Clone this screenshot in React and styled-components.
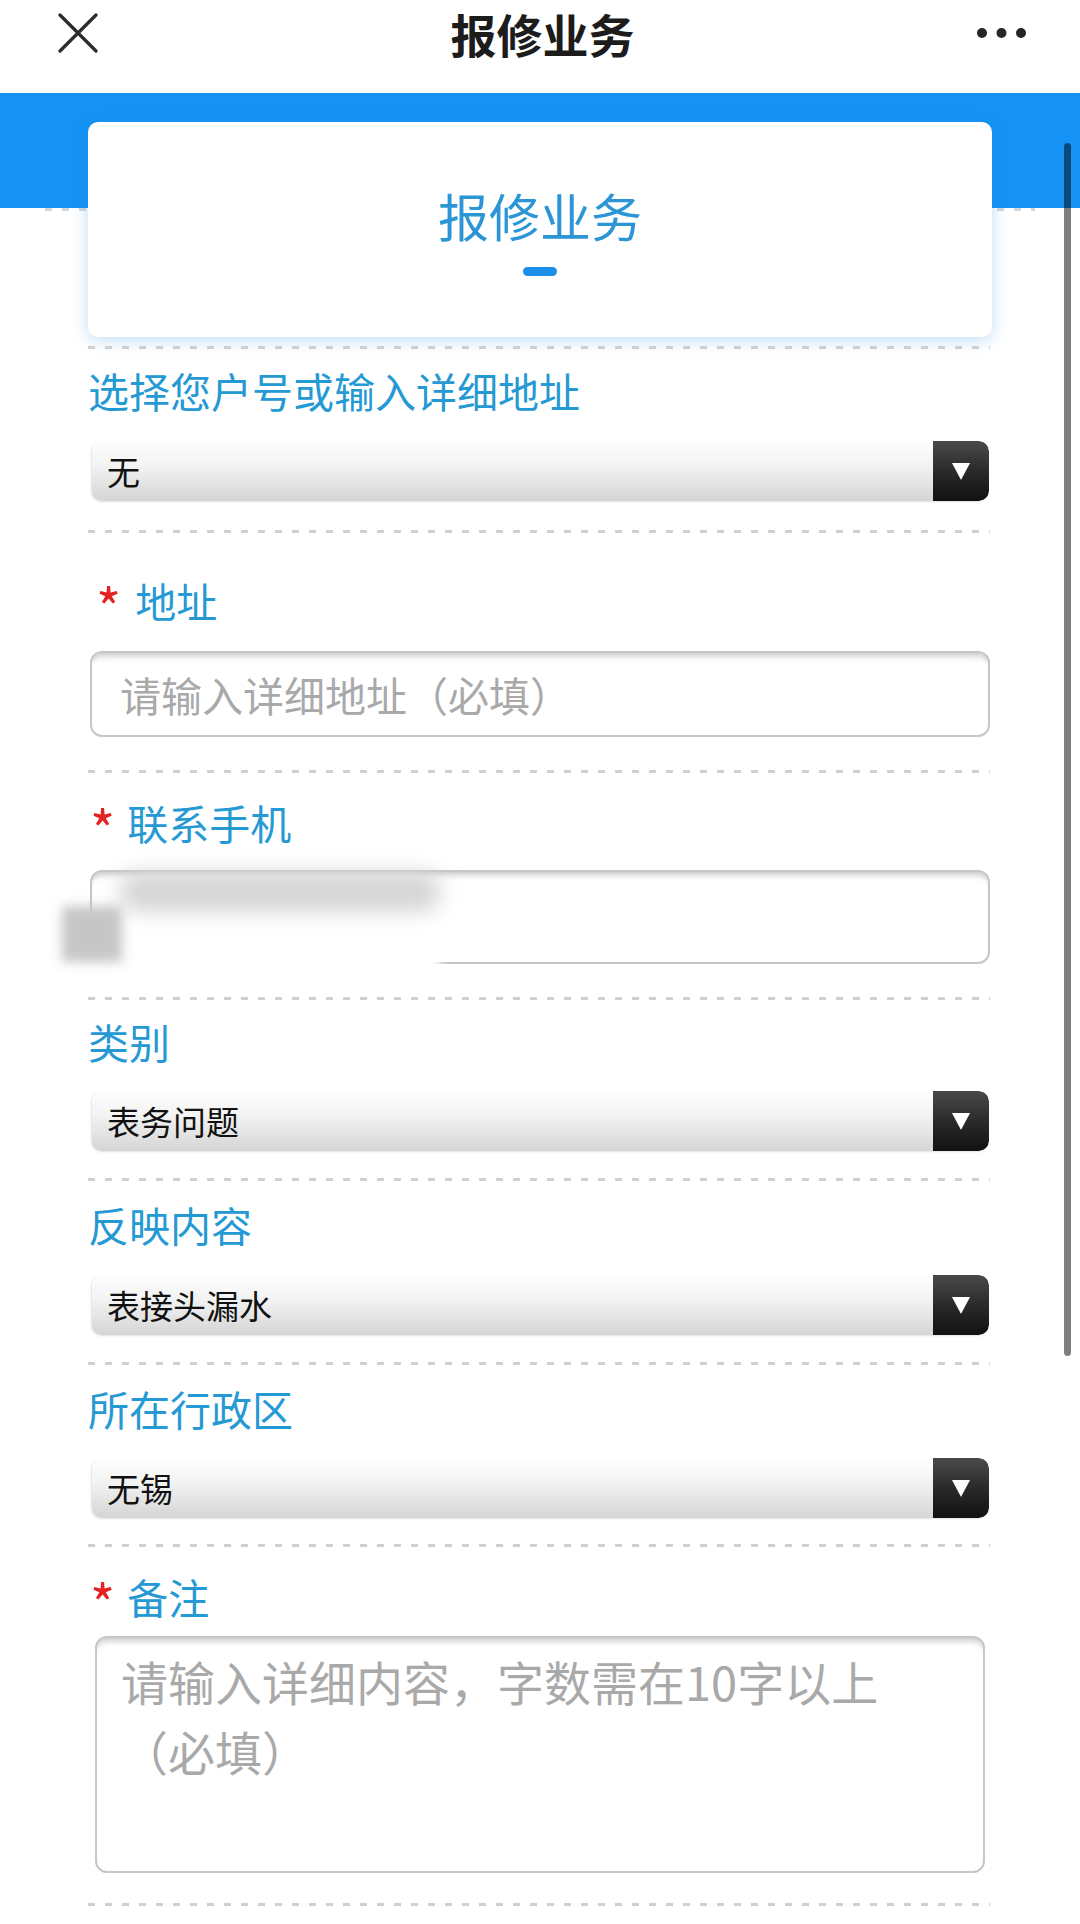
import React from 'react';
import styled, {createGlobalStyle} from 'styled-components';

const colors = {
    band: '#1592f3',
    label: '#2599d4',
    title: '#2b95d6',
    star: '#e52222',
    dash: '#cfcfcf',
    border: '#c6c6c6',
    hint: '#a9a9a9',
};

const GlobalStyle = createGlobalStyle`
    html, body {
        margin: 0;
        padding: 0;
        overflow: hidden;
        background: #fff;
    }
    body {
        font-family: "Noto Sans CJK SC", "Noto Sans", sans-serif;
    }
`;

const Page = styled.div`
    position: relative;
    width: 1080px;
    height: 1924px;
    overflow: hidden;
    background: #fff;
`;

// top navigation bar
const NavBar = styled.header`
    height: 93px;
    box-sizing: border-box;
    padding: 0 53px 27px 58px;
    display: flex;
    align-items: center;
    justify-content: space-between;
    background: #fff;
`;

const NavTitle = styled.h1`
    margin: 0;
    font-size: 46px;
    line-height: 66px;
    font-weight: 600;
    color: #1c1c1c;
`;

const NavSlot = styled.div`
    width: 50px;
    display: flex;
    justify-content: ${p => (p.$end ? 'flex-end' : 'flex-start')};
`;

const ScrollThumb = styled.div`
    position: absolute;
    left: 1064px;
    top: 143px;
    width: 7px;
    height: 1213px;
    border-radius: 4px;
    background: rgba(0, 0, 0, 0.5);
`;

// blue band with the floating card
const Hero = styled.section`
    padding: 29px 88px 9px;
    background:
        repeating-linear-gradient(to right, #cdd8e0 0 7px, transparent 7px 17px) 45px 115px / 990px 3px no-repeat,
        linear-gradient(${colors.band}, ${colors.band}) 0 0 / 100% 115px no-repeat,
        #fff;
`;

const Card = styled.div`
    height: 215px;
    box-sizing: border-box;
    padding-top: 68px;
    border-radius: 10px;
    background: #fff;
    box-shadow: 0 3px 16px rgba(40, 140, 220, 0.3);
    display: flex;
    flex-direction: column;
    align-items: center;
`;

const CardTitle = styled.h2`
    margin: 0;
    font-size: 51px;
    line-height: 51px;
    font-weight: 400;
    color: ${colors.title};
`;

const CardMark = styled.span`
    margin-top: 26px;
    width: 34px;
    height: 9px;
    border-radius: 5px;
    background: #1e8fe8;
`;

const Form = styled.form`
    margin: 0;
    padding: 0 88px;
`;

const Divider = styled.div`
    height: 3px;
    margin-right: 2px;
    background: repeating-linear-gradient(to right, ${colors.dash} 0 7px, transparent 7px 17px);
`;

const Field = styled.div`
    padding: ${p => p.$top}px 0 ${p => p.$bottom}px;
`;

const Label = styled.div`
    height: 50px;
    display: flex;
    align-items: center;
    margin-bottom: ${p => p.$gap}px;
    padding-left: ${p => p.$indent || 0}px;
    font-size: 41px;
    line-height: 50px;
    color: ${colors.label};
`;

const Star = styled.span`
    color: ${colors.star};
    font-size: 54px;
    line-height: 50px;
    margin-right: ${p => p.$space}px;
    position: relative;
    top: 6px;
`;

const SelectBox = styled.div`
    margin: 0 3px 0 4px;
    height: 60px;
    display: flex;
    align-items: center;
    border-radius: 10px;
    overflow: hidden;
    background: linear-gradient(180deg, #fefefe 0%, #f3f3f3 40%, #d5d5d5 100%);
    box-shadow: -1px 1px 2px rgba(0, 0, 0, 0.12);
`;

const SelectText = styled.span`
    flex: 1;
    padding-left: 15px;
    font-size: 33px;
    color: #111;
`;

const SelectButton = styled.span`
    width: 56px;
    align-self: stretch;
    display: flex;
    align-items: center;
    justify-content: center;
    border-radius: 0 10px 10px 0;
    background: linear-gradient(180deg, #4a4a4a 0%, #2a2a2a 50%, #111 100%);

    &::after {
        content: '';
        width: 0;
        height: 0;
        border-left: 9px solid transparent;
        border-right: 9px solid transparent;
        border-top: 17px solid #fff;
    }
`;

const InputWrap = styled.div`
    position: relative;
    margin: 0 ${p => p.$inset}px;
`;

const fieldBox = `
    display: block;
    box-sizing: border-box;
    width: 100%;
    border: 2px solid ${colors.border};
    border-radius: 12px;
    background: #fff;
    box-shadow: inset 0 8px 6px -5px rgba(0, 0, 0, 0.22);
    outline: none;
    font-family: "Noto Sans CJK SC", "Noto Sans", sans-serif;
    color: #222;
    &::placeholder {
        color: ${colors.hint};
    }
`;

const TextInput = styled.input`
    ${fieldBox}
    height: ${p => p.$h}px;
    padding: 0 28px;
    font-size: 41px;
`;

const TextArea = styled.textarea`
    ${fieldBox}
    height: 237px;
    resize: none;
    padding: 8px 50px 0 24px;
    font-size: 47px;
    line-height: 70px;
`;

// blurred privacy patch over the phone number
const Smudge = styled.div`
    position: absolute;
    left: ${p => p.$x}px;
    top: ${p => p.$y}px;
    width: ${p => p.$w}px;
    height: ${p => p.$hgt}px;
    border-radius: ${p => p.$r || 0}px;
    background: ${p => p.$c};
    filter: blur(${p => p.$blur}px);
`;

const CloseIcon = () => (
    <svg width="40" height="40" viewBox="0 0 40 40">
        <path d="M2 2 L38 38 M38 2 L2 38" stroke="#2a2a2a" strokeWidth="3.2" strokeLinecap="round" />
    </svg>
);

const MoreIcon = () => (
    <svg width="50" height="12" viewBox="0 0 50 12">
        <circle cx="5" cy="6" r="5" fill="#262626" />
        <circle cx="24.5" cy="6" r="5" fill="#262626" />
        <circle cx="44" cy="6" r="5" fill="#262626" />
    </svg>
);

const Select = ({value}) => (
    <SelectBox>
        <SelectText>{value}</SelectText>
        <SelectButton />
    </SelectBox>
);

const App = () => (
    <Page>
        <GlobalStyle />
        <NavBar>
            <NavSlot>
                <CloseIcon />
            </NavSlot>
            <NavTitle>报修业务</NavTitle>
            <NavSlot $end>
                <MoreIcon />
            </NavSlot>
        </NavBar>

        <Hero>
            <Card>
                <CardTitle>报修业务</CardTitle>
                <CardMark />
            </Card>
        </Hero>

        <Form onSubmit={e => e.preventDefault()}>
            <Divider />
            <Field $top={16} $bottom={29}>
                <Label $gap={26}>选择您户号或输入详细地址</Label>
                <Select value="无" />
            </Field>
            <Divider />
            <Field $top={42} $bottom={33}>
                <Label $gap={26} $indent={8}>
                    <Star $space={14}>*</Star>地址
                </Label>
                <InputWrap $inset={2}>
                    <TextInput $h={86} placeholder="请输入详细地址（必填）" />
                </InputWrap>
            </Field>
            <Divider />
            <Field $top={24} $bottom={33}>
                <Label $gap={23} $indent={2}>
                    <Star $space={12}>*</Star>联系手机
                </Label>
                <InputWrap $inset={2}>
                    <TextInput $h={94} />
                    <Smudge $x={-10} $y={76} $w={360} $hgt={26} $c="#fff" $blur={4} />
                    <Smudge $x={30} $y={2} $w={320} $hgt={40} $r={18} $c="#d6d6d6" $blur={10} />
                    <Smudge $x={-28} $y={36} $w={60} $hgt={56} $c="#c6c6c6" $blur={6} />
                </InputWrap>
            </Field>
            <Divider />
            <Field $top={16} $bottom={27}>
                <Label $gap={25}>类别</Label>
                <Select value="表务问题" />
            </Field>
            <Divider />
            <Field $top={18} $bottom={27}>
                <Label $gap={26}>反映内容</Label>
                <Select value="表接头漏水" />
            </Field>
            <Divider />
            <Field $top={18} $bottom={26}>
                <Label $gap={25}>所在行政区</Label>
                <Select value="无锡" />
            </Field>
            <Divider />
            <Field $top={24} $bottom={30}>
                <Label $gap={15} $indent={2}>
                    <Star $space={12}>*</Star>备注
                </Label>
                <InputWrap $inset={7}>
                    <TextArea placeholder="请输入详细内容，字数需在10字以上（必填）" />
                </InputWrap>
            </Field>
            <Divider />
            <Field $top={20} $bottom={20}>
                <Label $gap={15} $indent={2}>
                    <Star $space={12}>*</Star>报修图片
                </Label>
            </Field>
        </Form>

        <ScrollThumb />
    </Page>
);

export default App;
